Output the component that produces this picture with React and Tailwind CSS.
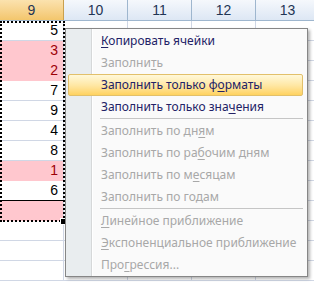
import React from "react";

const cols = ["9", "10", "11", "12", "13"];

// column 9 values; pink = conditional format fill
const rows = [
  { v: "5" },
  { v: "3", pink: true },
  { v: "2", pink: true },
  { v: "7" },
  { v: "9" },
  { v: "4" },
  { v: "8" },
  { v: "1", pink: true },
  { v: "6" },
  { v: "", pink: true },
  { v: "" },
  { v: "" },
  { v: "" },
];

const items = [
  { pre: "", u: "К", post: "опировать ячейки" },
  { pre: "Заполни", u: "т", post: "ь", off: true },
  { pre: "Заполнить только ф", u: "о", post: "рматы", active: true },
  { pre: "Заполнить только зна", u: "ч", post: "ения" },
  { sep: true },
  { pre: "Заполнить по дн", u: "я", post: "м", off: true },
  { pre: "Заполнить по ра", u: "б", post: "очим дням", off: true },
  { pre: "Заполнить по м", u: "е", post: "сяцам", off: true },
  { pre: "Заполнить по годам", u: "", post: "", off: true },
  { sep: true },
  { pre: "", u: "Л", post: "инейное приближение", off: true },
  { pre: "", u: "Э", post: "кспоненциальное приближение", off: true },
  { pre: "Про", u: "г", post: "рессия...", off: true },
];

function MenuItem({ item }) {
  if (item.sep) {
    return (
      <div className="flex h-[2px]">
        <div className="w-[26px] shrink-0" />
        <div className="ml-[8px] mr-[4px] h-px flex-1 bg-[#c5c5c5]" />
      </div>
    );
  }
  return (
    <div
      className={`mx-[2px] mr-[4px] flex h-[22px] items-center rounded-[2px] ${
        item.active
          ? "border border-[#e2c06a] bg-gradient-to-b from-[#fff8d9] via-[#ffe8a6] to-[#ffd25e]"
          : "border border-transparent"
      }`}
    >
      <span
        className={`pl-[32px] text-[12px] leading-none ${
          item.off ? "text-[#a8a8a8]" : "text-[#222266]"
        }`}
      >
        {item.pre}
        {item.u && <span className="underline underline-offset-2">{item.u}</span>}
        {item.post}
      </span>
    </div>
  );
}

export default function App() {
  return (
    <div
      className="relative h-[283px] w-[314px] overflow-hidden bg-white"
      style={{ fontFamily: '"Liberation Sans", Arial, sans-serif' }}
    >
      {/* header */}
      <div className="flex h-[21px] border-b border-[#9eb6ce]">
        {cols.map((c, i) => (
          <div
            key={c}
            className={`flex w-[64px] shrink-0 items-center justify-center border-r text-[14px] ${
              i === 0
                ? "border-[#c9a04e] bg-gradient-to-b from-[#fbe2ae] to-[#f3c66c] text-[#1f3555]"
                : "border-[#9eb6ce] bg-gradient-to-b from-[#f5f8fc] to-[#dde7f4] text-[#1f3555]"
            }`}
          >
            {c}
          </div>
        ))}
      </div>

      {/* grid rows */}
      {rows.map((r, i) => (
        <div key={i} className="flex h-[20px]">
          <div
            className={`flex w-[64px] shrink-0 items-center justify-end border-r border-b pr-[5px] text-[14px] ${
              r.pink
                ? "border-b-[#ffc7ce] border-r-[#d0d7e5] bg-[#ffc7ce] text-[#9c0006]"
                : "border-[#d0d7e5] text-black"
            } ${i === 8 ? "border-b-black" : ""}`}
          >
            {r.v}
          </div>
          {[0, 1, 2, 3].map(k => (
            <div key={k} className="w-[64px] shrink-0 border-r border-b border-[#d0d7e5]" />
          ))}
        </div>
      ))}

      {/* marching ants around copied range */}
      <div className="pointer-events-none absolute left-0 top-[21px] h-[201px] w-[65px] border-[2px] border-dotted border-black" />
      <div className="absolute left-[61px] top-[219px] h-[5px] w-[5px] bg-black ring-1 ring-white" />

      {/* context menu */}
      <div
        className="absolute left-[65px] top-[28px] h-[249px] w-[243px] border border-[#868686] bg-[#fafafa] shadow-[2px_2px_3px_rgba(0,0,0,0.3)]"
        style={{ fontFamily: '"Noto Sans", "Open Sans", sans-serif' }}
      >
        <div className="absolute bottom-0 left-0 top-0 w-[26px] border-r border-[#d6d8d9] bg-[#e9edef] shadow-[1px_0_0_#ffffff]" />
        <div className="relative pt-[1px]">
          {items.map((it, i) => (
            <MenuItem key={i} item={it} />
          ))}
        </div>
      </div>
    </div>
  );
}
